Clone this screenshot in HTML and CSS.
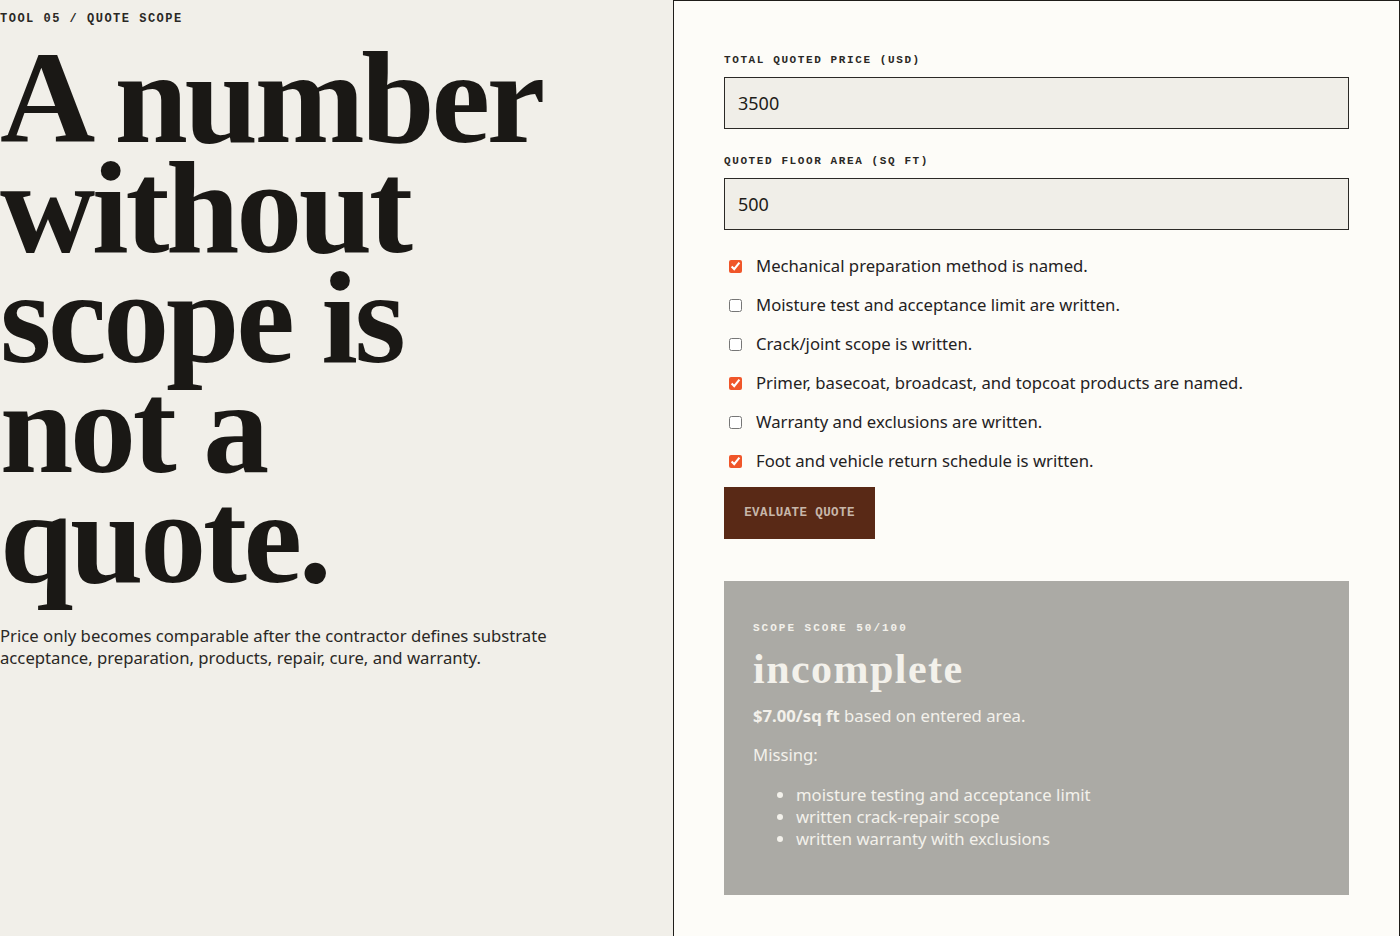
FILE: index.html
```html
<!DOCTYPE html>
<html lang="en">

<head>
    <meta charset="UTF-8">
    <meta name="viewport" content="width=device-width, initial-scale=1.0">
    <title>Quote Scope</title>
    <link rel="stylesheet" href="styles.css">
</head>

<body>
    <div class="page">
        <!-- Intro column -->
        <section class="intro">
            <p class="eyebrow">TOOL 05 / QUOTE SCOPE</p>
            <h1 class="headline">A number without scope is not a quote.</h1>
            <p class="lede">Price only becomes comparable after the contractor defines substrate acceptance, preparation, products, repair, cure, and warranty.</p>
        </section>

        <!-- Quote form -->
        <section class="panel">
            <div class="field">
                <label class="field-label" for="price">TOTAL QUOTED PRICE (USD)</label>
                <input class="field-input" id="price" type="text" value="3500">
            </div>
            <div class="field">
                <label class="field-label" for="area">QUOTED FLOOR AREA (SQ FT)</label>
                <input class="field-input" id="area" type="text" value="500">
            </div>

            <div class="checks">
                <label class="check"><input type="checkbox" checked> Mechanical preparation method is named.</label>
                <label class="check"><input type="checkbox"> Moisture test and acceptance limit are written.</label>
                <label class="check"><input type="checkbox"> Crack/joint scope is written.</label>
                <label class="check"><input type="checkbox" checked> Primer, basecoat, broadcast, and topcoat products are named.</label>
                <label class="check"><input type="checkbox"> Warranty and exclusions are written.</label>
                <label class="check"><input type="checkbox" checked> Foot and vehicle return schedule is written.</label>
            </div>

            <button class="evaluate" type="button">EVALUATE QUOTE</button>

            <!-- Result -->
            <div class="result">
                <p class="result-score">SCOPE SCORE 50/100</p>
                <h2 class="result-title">incomplete</h2>
                <p class="result-rate"><strong>$7.00/sq ft</strong> based on entered area.</p>
                <p class="result-missing">Missing:</p>
                <ul class="result-list">
                    <li>moisture testing and acceptance limit</li>
                    <li>written crack-repair scope</li>
                    <li>written warranty with exclusions</li>
                </ul>
            </div>
        </section>
    </div>
</body>

</html>
```

FILE: styles.css
```css
body {
    margin: 0;
    padding: 0;
    background-color: #f1efe9;
    color: #1e1c19;
    font-family: "Noto Sans", Arial, sans-serif;
}

.page {
    display: grid;
    grid-template-columns: 673px 727px;
    min-height: 936px;
}

/* Intro column */
.intro {
    padding: 10px 0 0 0;
}

.eyebrow {
    margin: 0;
    font-family: "Liberation Mono", "Courier New", monospace;
    font-size: 12px;
    font-weight: 700;
    line-height: 18px;
    letter-spacing: 1.5px;
    color: #2a2825;
}

.headline {
    margin: 15px 0 0 0;
    max-width: 560px;
    font-family: "Liberation Serif", "Times New Roman", serif;
    font-size: 132px;
    font-weight: 700;
    line-height: 110px;
    letter-spacing: -0.025em;
    color: #1a1815;
}

.lede {
    margin: 32px 0 0 0;
    max-width: 560px;
    font-size: 16.7px;
    line-height: 22px;
    color: #2a2825;
}

/* Form panel */
.panel {
    background-color: #fdfcf8;
    border: 1px solid #1f1d1a;
    border-bottom: none;
    padding: 52px 50px 40px 50px;
}

.field {
    display: flex;
    flex-direction: column;
    gap: 10px;
    margin-bottom: 25px;
}

.field-label {
    font-family: "Liberation Mono", "Courier New", monospace;
    font-size: 11px;
    font-weight: 700;
    line-height: 14px;
    letter-spacing: 1.6px;
    color: #2a2825;
}

.field-input {
    box-sizing: border-box;
    height: 52px;
    padding: 0 13px;
    border: 1px solid #2b2926;
    background-color: #f0eee8;
    font-family: "Noto Sans", Arial, sans-serif;
    font-size: 18px;
    color: #1e1c19;
    outline: none;
}

.checks {
    display: flex;
    flex-direction: column;
    gap: 17px;
    margin-top: 0;
}

.check {
    display: flex;
    align-items: center;
    gap: 14px;
    font-size: 16.7px;
    line-height: 22px;
    color: #24221f;
}

.check input {
    margin: 0 0 0 5px;
    width: 13px;
    height: 13px;
    accent-color: #f0562a;
}

.evaluate {
    margin-top: 15px;
    height: 52px;
    width: 151px;
    padding: 0;
    border: none;
    background-color: #592916;
    color: #c7b6a9;
    font-family: "Liberation Mono", "Courier New", monospace;
    font-size: 12.5px;
    font-weight: 700;
    letter-spacing: 0.4px;
    cursor: pointer;
}

/* Result card */
.result {
    margin-top: 42px;
    padding: 40px 29px 45px 29px;
    background-color: #abaaa5;
    color: #f3f1eb;
}

.result-score {
    margin: 0;
    font-family: "Liberation Mono", "Courier New", monospace;
    font-size: 11px;
    font-weight: 700;
    line-height: 14px;
    letter-spacing: 2px;
}

.result-title {
    margin: 11px 0 0 0;
    font-family: "Liberation Serif", "Times New Roman", serif;
    font-size: 42px;
    font-weight: 700;
    line-height: 46px;
    letter-spacing: 0.035em;
}

.result-rate,
.result-missing {
    margin: 13px 0 0 0;
    font-size: 16.7px;
    line-height: 22px;
}

.result-missing {
    margin-top: 17px;
}

.result-list {
    margin: 18px 0 0 0;
    padding-left: 43px;
    font-size: 16.7px;
    line-height: 22px;
}
```
